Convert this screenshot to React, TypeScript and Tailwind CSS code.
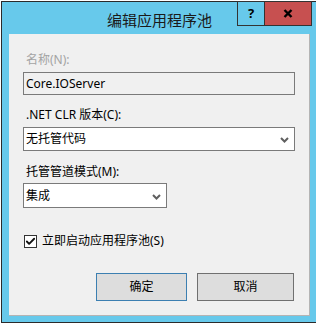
import { Check } from "lucide-react"

const font = { fontFamily: '"Noto Sans", "Noto Sans CJK SC", sans-serif' }

function Chevron() {
  return (
    <svg width="9" height="6" viewBox="0 0 9 6" className="mr-[5px] mt-[2px]">
      <path d="M1 1 L4.5 4.5 L8 1" fill="none" stroke="#5f5f5f" strokeWidth="2" />
    </svg>
  )
}

function Combo({ value, className }: { value: string; className: string }) {
  return (
    <div className={`flex items-center justify-between border border-[#7a7a7a] bg-white pl-[2px] ${className}`}>
      <span className="text-[12px] leading-4 text-black">{value}</span>
      <Chevron />
    </div>
  )
}

export default function App() {
  return (
    <div className="h-[325px] w-[316px] overflow-hidden bg-white" style={font}>
      <div className="relative ml-[1px] mt-[1px] h-[322px] w-[317px] border border-[#2b2b2b] bg-[#67c9eb]">
        {/* title bar */}
        <div className="flex h-[32px] items-center justify-center pt-[4px]">
          <span className="text-[15px] leading-5 text-[#1a1a1a]">编辑应用程序池</span>
        </div>
        <div className="absolute right-[5px] top-[-1px] flex h-[25px]">
          <div className="flex w-[27px] items-center justify-center border-y border-l border-[#333] bg-[#67c9eb] text-[13px] font-bold text-black">
            ?
          </div>
          <div className="flex w-[48px] items-center justify-center border border-[#333] bg-[#c75050]">
            <svg width="10" height="9" viewBox="0 0 10 9">
              <path d="M1.5 1 L8.5 8 M8.5 1 L1.5 8" stroke="#000" strokeWidth="2.4" />
            </svg>
          </div>
        </div>

        {/* client area */}
        <div className="ml-[7px] flex h-[282px] w-[301px] flex-col border-b border-r border-[#b4b4b4] bg-[#f0f0f0] pl-[14px] pt-[18px] text-[12px] leading-4 text-black">
          <div className="pl-[3px] text-[#a3a3a3]">名称(N):</div>
          <div className="mt-[4px] flex h-[23px] w-[272px] items-center border border-[#7a7a7a] pl-[2px]">
            Core.IOServer
          </div>

          <div className="mt-[12px] pl-[3px]">.NET CLR 版本(C):</div>
          <Combo value="无托管代码" className="mt-[4px] h-[24px] w-[272px]" />

          <div className="mt-[13px] pl-[3px]">托管管道模式(M):</div>
          <Combo value="集成" className="mt-[3px] h-[25px] w-[144px]" />

          <div className="mt-[25px] flex items-center pl-[1px]">
            <div className="flex h-[13px] w-[13px] items-center justify-center border border-[#333] bg-white">
              <Check size={11} strokeWidth={4} color="#111" />
            </div>
            <span className="ml-[5px]">立即启动应用程序池(S)</span>
          </div>

          <div className="ml-[73px] mt-[24px] flex gap-[10px]">
            <button className="flex h-[28px] w-[91px] items-center justify-center border border-[#3c7fb1] bg-[#dddddd] text-[12px] text-black">
              确定
            </button>
            <button className="flex h-[28px] w-[97px] items-center justify-center border border-[#707070] bg-[#dddddd] text-[12px] text-black">
              取消
            </button>
          </div>
        </div>
      </div>
    </div>
  )
}
